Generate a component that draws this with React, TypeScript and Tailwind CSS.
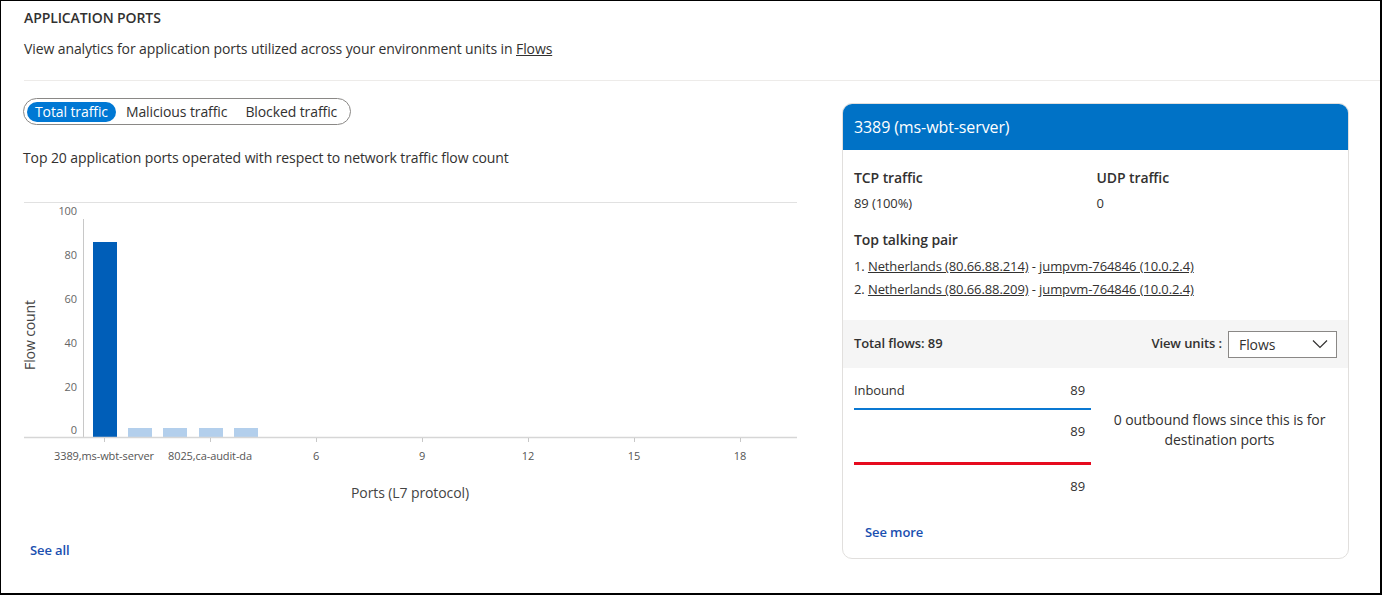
import React from "react";

const yTicks = [
  { v: "100", y: 211 },
  { v: "80", y: 255 },
  { v: "60", y: 299 },
  { v: "40", y: 343 },
  { v: "20", y: 387 },
  { v: "0", y: 430 },
];

const xTicks = [
  { l: "3389,ms-wbt-server", x: 103 },
  { l: "8025,ca-audit-da", x: 209 },
  { l: "6", x: 315 },
  { l: "9", x: 421 },
  { l: "12", x: 527 },
  { l: "15", x: 633 },
  { l: "18", x: 739 },
];

function Chart() {
  return (
    <svg width="800" height="320" viewBox="0 190 800 320" className="block">
      <line x1="23" y1="202.5" x2="796" y2="202.5" stroke="#e1e1e1" strokeWidth="1" />
      <line x1="82.5" y1="219" x2="82.5" y2="437" stroke="#c8c8c8" strokeWidth="1" />
      {yTicks.map((t) => (
        <text key={t.v} x="76" y={t.y + 4} textAnchor="end" fontSize="11" fill="#666" fontFamily="'Open Sans', sans-serif">
          {t.v}
        </text>
      ))}
      <rect x="92" y="242" width="24" height="195" fill="#005eb8" />
      {[127, 162, 198, 233].map((x) => (
        <rect key={x} x={x} y="428" width="24" height="9" fill="#b3cfec" />
      ))}
      <line x1="23" y1="437.5" x2="796" y2="437.5" stroke="#d6d6d6" strokeWidth="1.5" />
      {xTicks.map((t) => (
        <g key={t.l}>
          <line x1={t.x + 0.5} y1="438" x2={t.x + 0.5} y2="442" stroke="#c8c8c8" />
          <text x={t.x} y="460" textAnchor="middle" fontSize="11" fill="#555" fontFamily="'Open Sans', sans-serif">
            {t.l}
          </text>
        </g>
      ))}
      <text
        x="30"
        y="335"
        transform="rotate(-90 30 335)"
        textAnchor="middle"
        dominantBaseline="middle"
        fontSize="14"
        fill="#444"
        fontFamily="'Open Sans', sans-serif"
      >
        Flow count
      </text>
      <text x="409" y="498" textAnchor="middle" fontSize="14" fill="#444" fontFamily="'Open Sans', sans-serif">
        Ports (L7 protocol)
      </text>
    </svg>
  );
}

export default function App() {
  return (
    <div
      className="w-[1382px] h-[595px] bg-white border border-black border-b-2 border-r-2 overflow-hidden text-[#323130] tracking-[-0.1px]"
      style={{ fontFamily: "'Open Sans', 'Noto Sans', sans-serif" }}
    >
      <div className="pl-[23px]">
        <div className="pt-[7px] text-[14px] font-semibold leading-[20px]">APPLICATION PORTS</div>
        <div className="mt-[11px] text-[14px] leading-[20px]">
          View analytics for application ports utilized across your environment units in{" "}
          <span className="underline">Flows</span>
        </div>
        <div className="mt-[21px] h-px bg-[#edebe9]" />
      </div>
      <div className="flex">
        <div className="w-[818px] shrink-0 pl-[22px]">
          <div className="mt-[17px] inline-flex items-center h-[27px] rounded-full border border-[#8a8886] px-[3px] text-[14px]">
            <span className="h-[20px] leading-[20px] px-[8px] rounded-full bg-[#0078d4] text-white">Total traffic</span>
            <span className="px-[10px] leading-[20px]">Malicious traffic</span>
            <span className="pl-[8px] pr-[10px] leading-[20px]">Blocked traffic</span>
          </div>
          <div className="mt-[23px] text-[14px] leading-[20px]">
            Top 20 application ports operated with respect to network traffic flow count
          </div>
          <div className="-ml-[22px] mt-[22px]">
            <Chart />
          </div>
          <div className="pl-[7px] mt-[31px] text-[13px] font-semibold text-[#1a4fb0]">See all</div>
        </div>
        <div className="mt-[22px] ml-[23px] w-[507px] h-[456px] rounded-[10px] border border-[#e1dfdd] overflow-hidden flex flex-col">
          <div className="h-[46px] bg-[#0072c6] text-white text-[16px] flex items-center pl-[11px]">
            3389 (ms-wbt-server)
          </div>
          <div className="px-[11px] pt-[18px]">
            <div className="grid grid-cols-2">
              <div>
                <div className="text-[14px] font-semibold leading-[20px]">TCP traffic</div>
                <div className="mt-[6px] text-[13px] leading-[18px]">89 (100%)</div>
              </div>
              <div className="pl-[1px]">
                <div className="text-[14px] font-semibold leading-[20px]">UDP traffic</div>
                <div className="mt-[6px] text-[13px] leading-[18px]">0</div>
              </div>
            </div>
            <div className="mt-[18px] text-[14px] font-semibold leading-[20px]">Top talking pair</div>
            <div className="mt-[5px] text-[13px] leading-[23px]">
              <div>
                1. <span className="underline">Netherlands (80.66.88.214)</span> - <span className="underline">jumpvm-764846 (10.0.2.4)</span>
              </div>
              <div>
                2. <span className="underline">Netherlands (80.66.88.209)</span> - <span className="underline">jumpvm-764846 (10.0.2.4)</span>
              </div>
            </div>
          </div>
          <div className="mt-[19px] h-[48px] bg-[#f5f5f5] flex items-center justify-between pl-[11px] pr-[11px]">
            <div className="text-[13px] font-semibold">Total flows: 89</div>
            <div className="flex items-center">
              <span className="text-[13px] font-semibold mr-[6px]">View units :</span>
              <div className="w-[109px] h-[27px] border border-[#8a8886] bg-white flex items-center justify-between pl-[10px] pr-[8px] text-[14px]">
                <span>Flows</span>
                <svg width="16" height="10" viewBox="0 0 16 10" fill="none">
                  <path d="M1 1.5 L8 8.5 L15 1.5" stroke="#323130" strokeWidth="1.2" />
                </svg>
              </div>
            </div>
          </div>
          <div className="flex pl-[11px] pt-[12px]">
            <div className="w-[237px] shrink-0">
              <div className="flex justify-between text-[13px] leading-[20px] pr-[6px]">
                <span>Inbound</span>
                <span>89</span>
              </div>
              <div className="mt-[8px] h-[2px] bg-[#0a78d2]" />
              <div className="mt-[11px] text-right text-[13px] leading-[20px] pr-[6px]">89</div>
              <div className="mt-[21px] h-[3px] bg-[#e60a1e]" />
              <div className="mt-[11px] text-right text-[13px] leading-[20px] pr-[6px]">89</div>
            </div>
            <div className="flex-1 pt-[30px] text-center text-[14px] leading-[20px] px-[6px]">
              0 outbound flows since this is for destination ports
            </div>
          </div>
          <div className="pl-[22px] mt-[27px] text-[13px] font-semibold text-[#1a4fb0]">See more</div>
        </div>
      </div>
    </div>
  );
}
